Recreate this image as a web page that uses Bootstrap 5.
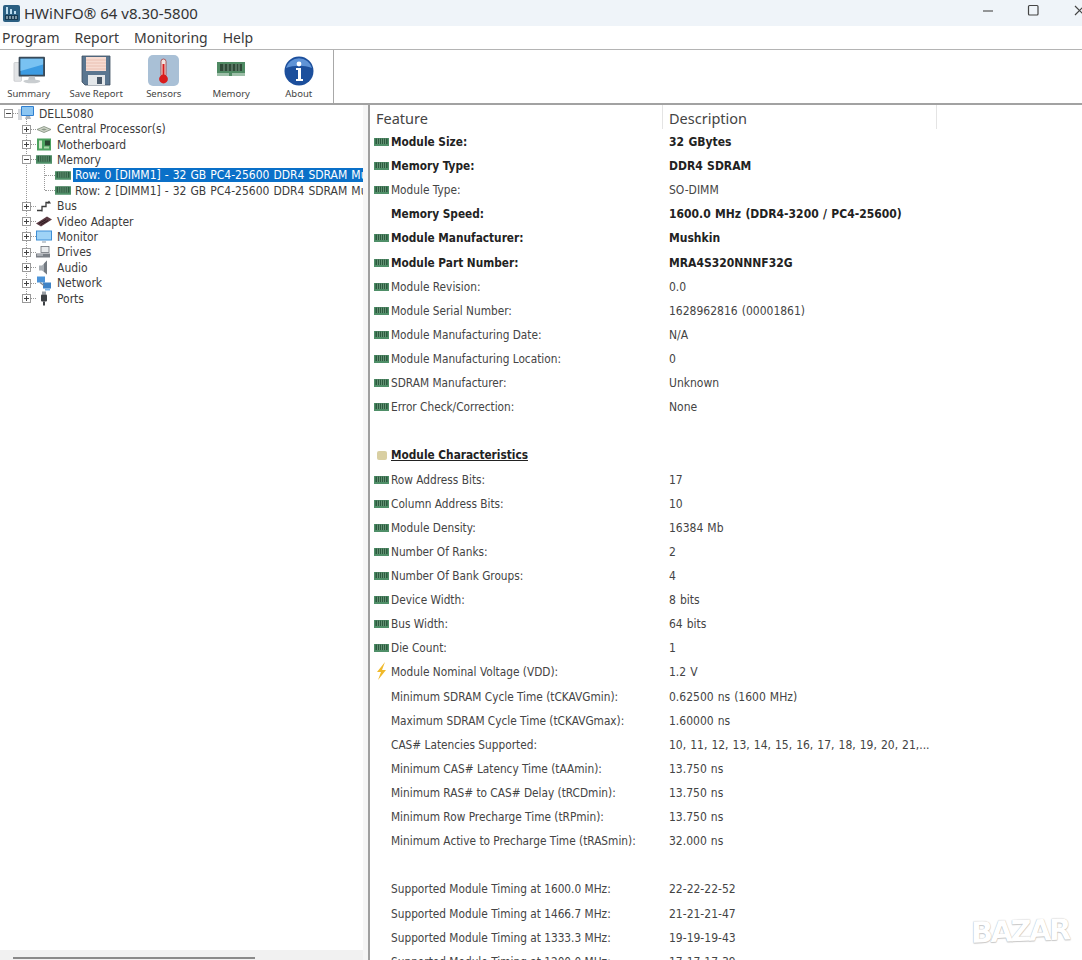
<!DOCTYPE html>
<html lang="en">
<head>
  <meta charset="UTF-8" />
  <title>HWiNFO 64</title>
  <meta name="viewport" content="width=device-width, initial-scale=1.0" />
  <link href="https://cdn.jsdelivr.net/npm/bootstrap@5.3.3/dist/css/bootstrap.min.css" rel="stylesheet" />
  <style>
    html, body { height: 960px; overflow: hidden; background: #fff; }
    body { font-family: "Noto Sans", "Open Sans", sans-serif; color: #333; }
    .app-shell { width: 1082px; height: 960px; overflow: hidden; position: relative; }

    .title-bar { height: 26px; background: #eff4f9; flex: none; }
    .title-logo { width: 17px; height: 17px; margin: 0 4px 0 3px; }
    .title-text { font-size: 15px; color: #333; }
    .win-btn { width: 46px; height: 26px; flex: none; }
    .win-close { margin-right: -21px; }

    .menu-bar { height: 24px; flex: none; border-bottom: 1px solid #b4b4b4; font-size: 14px; color: #3a3a3a; padding-left: 2px; gap: 15px; }

    .tool-bar { height: 55px; flex: none; border-bottom: 2px solid #a2a2a2; }
    .tool-group { margin-left: -5px; border-right: 1px solid #a8a8a8; height: 53px; }
    .tool-btn { width: 67.5px; font-size: 9.5px; color: #444; padding-top: 4px; }
    .tool-icon { height: 33px; }

    .tree-pane { width: 363px; flex: none; position: relative; overflow: hidden; font: 12px "DejaVu Sans Condensed", "Noto Sans", sans-serif; color: #3c3c3c; padding-top: 1px; }
    .tree-row { height: 15.42px; white-space: nowrap; position: relative; z-index: 1; }
    .tree-box { width: 9px; height: 9px; border: 1px solid #9a9a9a; background: #fff; flex: none; position: relative; }
    .tree-box::before { content: ""; position: absolute; left: 1px; right: 1px; top: 3px; height: 1px; background: #444; }
    .tree-box.closed::after { content: ""; position: absolute; top: 1px; bottom: 1px; left: 3px; width: 1px; background: #444; }
    .tree-dash { width: 5px; flex: none; border-top: 1px dotted #999; }
    .tree-ico { width: 16px; height: 15px; flex: none; margin-right: 5px; }
    .lvl-0 { padding-left: 4px; }
    .lvl-1 { padding-left: 22px; }
    .lvl-2 { padding-left: 45px; }
    .lvl-2 .tree-dash { width: 10px; }
    .lvl-2 .tree-ico { margin-right: 2px; }
    .tree-group { position: relative; }
    .tree-group::before { content: ""; position: absolute; left: 26px; top: -4px; bottom: 8px; border-left: 1px dotted #999; }
    .tree-sub { position: relative; word-spacing: .6px; }
    .tree-sub::before { content: ""; position: absolute; left: 44px; top: -3px; bottom: 8px; border-left: 1px dotted #999; }
    .tree-sel { background: #0a70c8; color: #fff; flex: 1; height: 14px; line-height: 14px; padding-left: 2px; overflow: hidden; }
    .tree-label { line-height: 14px; }
    .row-plain { padding-left: 2px; }
    .h-scroll { position: absolute; left: 0; right: 0; bottom: 0; height: 10px; background: #f1f1f1; }
    .h-thumb { position: absolute; left: 13px; width: 242px; bottom: 1px; height: 2px; background: #8a8a8a; }

    .v-strip { width: 5px; flex: none; background: #f6f6f6; }
    .detail-pane { flex: 1; border-left: 2px solid #a0a0a0; overflow: hidden; font: 12px "DejaVu Sans Condensed", "Noto Sans", sans-serif; padding-left: 4px; min-width: 0; }
    .head-row { height: 25px; flex: none; font: 14.5px "Noto Sans", sans-serif; color: #444; }
    .head-cell { height: 24px; line-height: 26px; padding-left: 2px; border-right: 1px solid #e4e4e4; }
    .head-feat { width: 289px; }
    .head-desc { width: 274px; padding-left: 6px; }

    .info-row { height: 24.12px; line-height: 24px; white-space: nowrap; color: #444; }
    .info-row.strong { font-weight: 700; color: #222; }
    .info-ico { width: 15px; height: 14px; flex: none; margin-right: 2px; }
    .info-ico.tall { height: 18px; margin-top: -3px; }
    .info-name { width: 278px; flex: none; font-size: 11.75px; }
    .info-val { flex: 1; word-spacing: .6px; }
    .info-head { font-weight: 700; color: #222; text-decoration: underline; }

    .wm-text { position: absolute; left: 971px; top: 911px; font: 700 29px/40px "DejaVu Sans", sans-serif; letter-spacing: -2.5px; color: #fff; text-shadow: 0 0 1px #aaa, 0 1px 1px #ccc; transform: skewY(-2deg); }
  </style>
</head>
<body>
  <svg width="0" height="0" class="position-absolute">
    <symbol id="ram" viewBox="0 0 15 10">
      <rect x="0" y="1" width="15" height="8" fill="#4f8f68"/>
      <rect x="1.5" y="1.5" width="12" height="5.5" fill="#2b5a3e"/>
      <path d="M3.5 1.5v5.5M5.5 1.5v5.5M7.5 1.5v5.5M9.5 1.5v5.5M11.5 1.5v5.5" stroke="#7ba98b" stroke-width=".7"/>
    </symbol>
    <symbol id="pc" viewBox="0 0 16 15">
      <rect x="0" y="3" width="4" height="11" fill="#d5d8dc"/>
      <rect x="3" y="0" width="13" height="10" rx="1" fill="#2f7fd0"/>
      <rect x="4" y="1" width="11" height="8" fill="#8cc6f2"/>
      <path d="M8 10h4l1 3H7z" fill="#b0b6bc"/>
    </symbol>
    <symbol id="cpu" viewBox="0 0 16 14">
      <path d="M1 7l7-3 7 3-7 3z" fill="#cfd4c8" stroke="#7b8a78" stroke-width=".8"/>
      <path d="M5 7l3-1 3 1-3 1z" fill="#8b9a88"/>
    </symbol>
    <symbol id="board" viewBox="0 0 16 14">
      <rect x="1" y="1" width="14" height="12" fill="#4ba25f"/>
      <rect x="3" y="3" width="3" height="8" fill="#cfe8c9"/>
      <rect x="9" y="3" width="5" height="5" fill="#27452f"/>
      <rect x="8" y="9" width="5" height="2" fill="#a9d3a8"/>
    </symbol>
    <symbol id="bus" viewBox="0 0 16 14">
      <path d="M1 11h5V7h4V3h3M6 7v5" fill="none" stroke="#3a3a3a" stroke-width="1.3"/>
      <path d="M13 1l2 3h-4z" fill="#3a3a3a"/>
    </symbol>
    <symbol id="gpu" viewBox="0 0 16 14">
      <path d="M0 9l11-7 5 3-11 7z" fill="#5a3a42"/>
      <path d="M3 9l7-4M5 10l7-4" stroke="#2d1c20" stroke-width="1"/>
    </symbol>
    <symbol id="mon" viewBox="0 0 16 14">
      <rect x="0" y="1" width="16" height="10" fill="#3f8fd6"/>
      <rect x="1" y="2" width="14" height="8" fill="#9fd3f6"/>
      <path d="M6 12h4v1H6z" fill="#8a97a3"/>
    </symbol>
    <symbol id="drive" viewBox="0 0 16 14">
      <rect x="0" y="8" width="14" height="4" fill="#7a7f86"/>
      <rect x="5" y="1" width="8" height="6" fill="#e8eaec" stroke="#6b7078" stroke-width=".8"/>
      <rect x="1" y="9" width="6" height="1" fill="#d8dbdf"/>
    </symbol>
    <symbol id="audio" viewBox="0 0 16 14">
      <path d="M3 5h3l5-5v14l-5-4H3z" fill="#a9afb5"/>
      <path d="M8 3l3-3v14l-3-3z" fill="#737a81"/>
    </symbol>
    <symbol id="net" viewBox="0 0 16 14">
      <rect x="1" y="0" width="8" height="6" fill="#4b93d8"/>
      <rect x="7" y="6" width="8" height="6" fill="#3f83c6"/>
      <path d="M4 6l4 3" stroke="#7f8a94" stroke-width="1.4"/>
      <rect x="9" y="12" width="5" height="2" fill="#7fb6e8"/>
    </symbol>
    <symbol id="port" viewBox="0 0 16 14">
      <rect x="6" y="0" width="4" height="3" fill="#9aa0a6"/>
      <rect x="5" y="3" width="6" height="7" rx="1" fill="#3c4044"/>
      <rect x="7" y="10" width="2" height="4" fill="#3c4044"/>
    </symbol>
    <symbol id="bolt" viewBox="0 0 15 18">
      <path d="M11 0L3 10h4l-3 8 8-10H8z" fill="#f0b92a"/>
    </symbol>
    <symbol id="folder" viewBox="0 0 15 14">
      <rect x="3" y="3" width="10" height="9" rx="2" fill="#d9cfa2"/>
    </symbol>
  </svg>

  <div class="app-shell d-flex flex-column">
    <div class="title-bar d-flex align-items-center">
      <svg class="title-logo" viewBox="0 0 17 17">
        <rect width="17" height="17" rx="2" fill="#2b5f82"/>
        <path d="M3 2h2v7H3zM7 4h2v5H7zM11 6h2v3h-2z" fill="#bcdcef"/>
        <rect x="2" y="10" width="13" height="5" fill="#173a52"/>
        <path d="M4 11v3M7 11v3M10 11v3M13 11v3" stroke="#e0eef6" stroke-width="1"/>
      </svg>
      <span class="title-text flex-grow-1">HWiNFO® 64 v8.30-5800</span>
      <svg class="win-btn" viewBox="0 0 46 26"><path d="M18 11h10" stroke="#555" stroke-width="1.2"/></svg>
      <svg class="win-btn" viewBox="0 0 46 26"><rect x="17.5" y="5.5" width="9.5" height="9.5" rx="1" fill="none" stroke="#444" stroke-width="1.2"/></svg>
      <svg class="win-btn win-close" viewBox="0 0 46 26"><path d="M18 6l9 9M27 6l-9 9" stroke="#444" stroke-width="1.2"/></svg>
    </div>

    <div class="menu-bar d-flex align-items-center">
      <span>Program</span><span>Report</span><span>Monitoring</span><span>Help</span>
    </div>

    <div class="tool-bar d-flex">
      <div class="tool-group d-flex">
        <div class="tool-btn text-center">
          <svg class="tool-icon" width="32" viewBox="0 0 34 33">
            <rect x="1" y="8" width="8" height="20" rx="1" fill="#e2e4e6" stroke="#b6babd" stroke-width=".6"/>
            <rect x="6" y="2" width="28" height="21" rx="1" fill="#3a4a58"/>
            <rect x="8" y="4" width="24" height="17" fill="#3c9be2"/>
            <path d="M8 4h24v6L8 17z" fill="#79c2f2"/>
            <path d="M17 23h6l1 4h-8z" fill="#c0c4c8"/>
            <ellipse cx="20" cy="28" rx="9" ry="2" fill="#c9cdd0"/>
          </svg>
          <div>Summary</div>
        </div>
        <div class="tool-btn text-center">
          <svg class="tool-icon" width="30" viewBox="0 0 30 33">
            <path d="M1 2h28v29H4l-3-3z" fill="#5a7690" stroke="#3d4f60" stroke-width=".8"/>
            <rect x="5" y="3" width="20" height="14" fill="#f7dcd2"/>
            <path d="M5 6h20M5 9h20M5 12h20M5 15h20" stroke="#e6b9a9" stroke-width=".8"/>
            <rect x="7" y="21" width="17" height="10" fill="#e3e7ea"/>
            <rect x="16" y="23" width="5" height="7" fill="#48596a"/>
          </svg>
          <div>Save Report</div>
        </div>
        <div class="tool-btn text-center">
          <svg class="tool-icon" width="31" viewBox="0 0 31 33">
            <rect x="0" y="1" width="31" height="31" rx="5" fill="#a9c0d6"/>
            <rect x="13" y="5" width="5" height="18" rx="2.5" fill="#f1e3e0" stroke="#a23a3a" stroke-width=".8"/>
            <rect x="14.5" y="10" width="2" height="14" fill="#d91c1c"/>
            <circle cx="15.5" cy="25" r="4.4" fill="#d91c1c"/>
          </svg>
          <div>Sensors</div>
        </div>
        <div class="tool-btn text-center">
          <svg class="tool-icon" width="28" viewBox="0 0 28 33">
            <rect x="0" y="8" width="28" height="14" fill="#4f8a63"/>
            <rect x="3" y="10" width="22" height="7" fill="#2f4a38"/>
            <path d="M7 10v7M11 10v7M15 10v7M19 10v7M22 10v7" stroke="#7d9a86" stroke-width="1"/>
            <rect x="0" y="19" width="12" height="3" fill="#9dbfa8"/>
            <rect x="15" y="19" width="13" height="3" fill="#9dbfa8"/>
          </svg>
          <div>Memory</div>
        </div>
        <div class="tool-btn text-center">
          <svg class="tool-icon" width="30" viewBox="0 0 30 33">
            <circle cx="15" cy="17" r="14.5" fill="#1c4f9c"/>
            <path d="M2 14a13.5 13.5 0 0 1 26 0c-8-3-18-3-26 0z" fill="#5f93d6"/>
            <circle cx="15" cy="10" r="2.4" fill="#fff"/>
            <path d="M12 14h5v11h2v2h-7v-2h2v-9h-2z" fill="#fff"/>
          </svg>
          <div>About</div>
        </div>
      </div>
    </div>

    <div class="d-flex flex-grow-1" style="min-height:0">
      <div class="tree-pane">
        <div class="tree-row lvl-0 d-flex align-items-center">
          <span class="tree-box"></span><span class="tree-dash"></span>
          <svg class="tree-ico"><use href="#pc"/></svg><span class="tree-label">DELL5080</span>
        </div>
        <div class="tree-group" id="treeGroup"></div>
        <div class="h-scroll"><div class="h-thumb"></div></div>
      </div>
      <div class="v-strip"></div>
      <div class="detail-pane">
        <div class="head-row d-flex">
          <div class="head-cell head-feat">Feature</div>
          <div class="head-cell head-desc">Description</div>
        </div>
        <div id="infoRows"></div>
      </div>
    </div>

    <div class="wm-text">BAZAR</div>
  </div>

  <script src="https://cdn.jsdelivr.net/npm/bootstrap@5.3.3/dist/js/bootstrap.bundle.min.js"></script>
  <script>
    const tree = [
      ["cpu", "Central Processor(s)"], ["board", "Motherboard"], ["ram", "Memory", true],
      ["bus", "Bus"], ["gpu", "Video Adapter"], ["mon", "Monitor"], ["drive", "Drives"],
      ["audio", "Audio"], ["net", "Network"], ["port", "Ports"]
    ];
    const dimm = " [DIMM1] - 32 GB PC4-25600 DDR4 SDRAM Mushkin MRA4S320NNNF32G";

    document.getElementById("treeGroup").innerHTML = tree.map(([ico, label, open]) => `
      <div class="tree-row lvl-1 d-flex align-items-center">
        <span class="tree-box ${open ? "" : "closed"}"></span><span class="tree-dash"></span>
        <svg class="tree-ico"><use href="#${ico}"/></svg><span class="tree-label">${label}</span>
      </div>
      ${open ? `<div class="tree-sub">
        <div class="tree-row lvl-2 d-flex align-items-center"><span class="tree-dash"></span>
          <svg class="tree-ico"><use href="#ram"/></svg><span class="tree-sel">Row: 0${dimm}</span></div>
        <div class="tree-row lvl-2 d-flex align-items-center"><span class="tree-dash"></span>
          <svg class="tree-ico"><use href="#ram"/></svg><span class="tree-label row-plain">Row: 2${dimm}</span></div>
      </div>` : ""}`).join("");

    // [icon, name, value, bold]
    const info = [
      ["ram", "Module Size:", "32 GBytes", 1],
      ["ram", "Memory Type:", "DDR4 SDRAM", 1],
      ["ram", "Module Type:", "SO-DIMM"],
      ["", "Memory Speed:", "1600.0 MHz (DDR4-3200 / PC4-25600)", 1],
      ["ram", "Module Manufacturer:", "Mushkin", 1],
      ["ram", "Module Part Number:", "MRA4S320NNNF32G", 1],
      ["ram", "Module Revision:", "0.0"],
      ["ram", "Module Serial Number:", "1628962816 (00001861)"],
      ["ram", "Module Manufacturing Date:", "N/A"],
      ["ram", "Module Manufacturing Location:", "0"],
      ["ram", "SDRAM Manufacturer:", "Unknown"],
      ["ram", "Error Check/Correction:", "None"],
      [],
      ["folder", "Module Characteristics", "", 2],
      ["ram", "Row Address Bits:", "17"],
      ["ram", "Column Address Bits:", "10"],
      ["ram", "Module Density:", "16384 Mb"],
      ["ram", "Number Of Ranks:", "2"],
      ["ram", "Number Of Bank Groups:", "4"],
      ["ram", "Device Width:", "8 bits"],
      ["ram", "Bus Width:", "64 bits"],
      ["ram", "Die Count:", "1"],
      ["bolt", "Module Nominal Voltage (VDD):", "1.2 V"],
      ["", "Minimum SDRAM Cycle Time (tCKAVGmin):", "0.62500 ns (1600 MHz)"],
      ["", "Maximum SDRAM Cycle Time (tCKAVGmax):", "1.60000 ns"],
      ["", "CAS# Latencies Supported:", "10, 11, 12, 13, 14, 15, 16, 17, 18, 19, 20, 21,..."],
      ["", "Minimum CAS# Latency Time (tAAmin):", "13.750 ns"],
      ["", "Minimum RAS# to CAS# Delay (tRCDmin):", "13.750 ns"],
      ["", "Minimum Row Precharge Time (tRPmin):", "13.750 ns"],
      ["", "Minimum Active to Precharge Time (tRASmin):", "32.000 ns"],
      [],
      ["", "Supported Module Timing at 1600.0 MHz:", "22-22-22-52"],
      ["", "Supported Module Timing at 1466.7 MHz:", "21-21-21-47"],
      ["", "Supported Module Timing at 1333.3 MHz:", "19-19-19-43"],
      ["", "Supported Module Timing at 1200.0 MHz:", "17-17-17-39"]
    ];

    document.getElementById("infoRows").innerHTML = info.map(([ico, name, val, bold]) => {
      const icon = ico ? `<svg class="info-ico ${ico === "bolt" ? "tall" : ""}"><use href="#${ico}"/></svg>` : `<span class="info-ico"></span>`;
      if (!name) return `<div class="info-row"></div>`;
      return `<div class="info-row d-flex align-items-center ${bold === 1 ? "strong" : ""}">
        ${icon}<span class="info-name ${bold === 2 ? "info-head" : ""}">${name}</span><span class="info-val">${val}</span>
      </div>`;
    }).join("");
  </script>
</body>
</html>
